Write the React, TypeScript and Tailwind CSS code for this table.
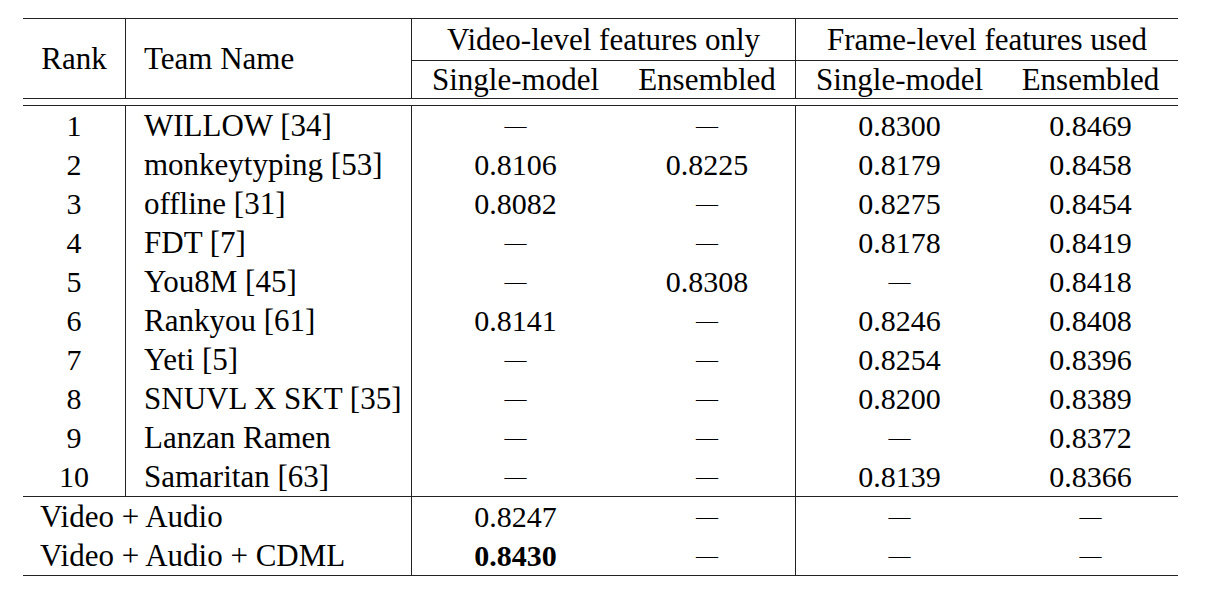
const rows = [
    ["1", "WILLOW [34]", "—", "—", "0.8300", "0.8469"],
    ["2", "monkeytyping [53]", "0.8106", "0.8225", "0.8179", "0.8458"],
    ["3", "offline [31]", "0.8082", "—", "0.8275", "0.8454"],
    ["4", "FDT [7]", "—", "—", "0.8178", "0.8419"],
    ["5", "You8M [45]", "—", "0.8308", "—", "0.8418"],
    ["6", "Rankyou [61]", "0.8141", "—", "0.8246", "0.8408"],
    ["7", "Yeti [5]", "—", "—", "0.8254", "0.8396"],
    ["8", "SNUVL X SKT [35]", "—", "—", "0.8200", "0.8389"],
    ["9", "Lanzan Ramen", "—", "—", "—", "0.8372"],
    ["10", "Samaritan [63]", "—", "—", "0.8139", "0.8366"],
];

const Val = ({ v, bold }: { v: string; bold?: boolean }) =>
    v === "—" ? (
        <span className="text-[22px]">—</span>
    ) : (
        <span className={bold ? "text-[30px] font-bold" : "text-[30px]"}>{v}</span>
    );

const App = () => {
    return (
        <div className="w-[1216px] h-[602px] bg-white pt-[18px] pl-[23px] text-black text-[31px] leading-none" style={{ fontFamily: '"Liberation Serif", "DejaVu Serif", serif' }}>
            <div className="w-[1155px]">
                {/* header */}
                <div className="flex border-t-[1.5px] border-[#222] h-[80px]">
                    <div className="w-[102px] flex items-center justify-center">Rank</div>
                    <div className="w-[286px] flex items-center pl-[18px] border-l-[1.5px] border-[#222]">Team Name</div>
                    <div className="flex-1 flex flex-col">
                        <div className="flex h-[41px]">
                            <div className="w-[384px] flex items-center justify-center border-l-[1.5px] border-[#222]">Video-level features only</div>
                            <div className="flex-1 flex items-center justify-center border-l-[1.5px] border-[#222]">Frame-level features used</div>
                        </div>
                        <div className="flex flex-1 border-t-[1.5px] border-[#222]">
                            <div className="w-[208px] flex items-center justify-center border-l-[1.5px] border-[#222]">Single-model</div>
                            <div className="w-[176px] flex items-center justify-center">Ensembled</div>
                            <div className="w-[208px] flex items-center justify-center border-l-[1.5px] border-[#222]">Single-model</div>
                            <div className="flex-1 flex items-center justify-center">Ensembled</div>
                        </div>
                    </div>
                </div>
                <div className="h-[8px] border-y-[1.5px] border-[#222]"></div>

                {/* teams */}
                {rows.map((r) => (
                    <div key={r[0]} className="flex h-[39px]">
                        <div className="w-[102px] flex items-center justify-center text-[30px]">{r[0]}</div>
                        <div className="w-[286px] flex items-center pl-[18px] border-l-[1.5px] border-[#222]">{r[1]}</div>
                        <div className="w-[208px] flex items-center justify-center border-l-[1.5px] border-[#222]"><Val v={r[2]} /></div>
                        <div className="w-[176px] flex items-center justify-center"><Val v={r[3]} /></div>
                        <div className="w-[208px] flex items-center justify-center border-l-[1.5px] border-[#222]"><Val v={r[4]} /></div>
                        <div className="flex-1 flex items-center justify-center"><Val v={r[5]} /></div>
                    </div>
                ))}

                {/* ablations */}
                <div className="border-y-[1.5px] border-[#222]">
                    <div className="flex h-[39px]">
                        <div className="w-[388px] flex items-center pl-[17px]">Video + Audio</div>
                        <div className="w-[208px] flex items-center justify-center border-l-[1.5px] border-[#222]"><Val v="0.8247" /></div>
                        <div className="w-[176px] flex items-center justify-center"><Val v="—" /></div>
                        <div className="w-[208px] flex items-center justify-center border-l-[1.5px] border-[#222]"><Val v="—" /></div>
                        <div className="flex-1 flex items-center justify-center"><Val v="—" /></div>
                    </div>
                    <div className="flex h-[39px]">
                        <div className="w-[388px] flex items-center pl-[17px]">Video + Audio + CDML</div>
                        <div className="w-[208px] flex items-center justify-center border-l-[1.5px] border-[#222]"><Val v="0.8430" bold /></div>
                        <div className="w-[176px] flex items-center justify-center"><Val v="—" /></div>
                        <div className="w-[208px] flex items-center justify-center border-l-[1.5px] border-[#222]"><Val v="—" /></div>
                        <div className="flex-1 flex items-center justify-center"><Val v="—" /></div>
                    </div>
                </div>
            </div>
        </div>
    );
};

export default App;
